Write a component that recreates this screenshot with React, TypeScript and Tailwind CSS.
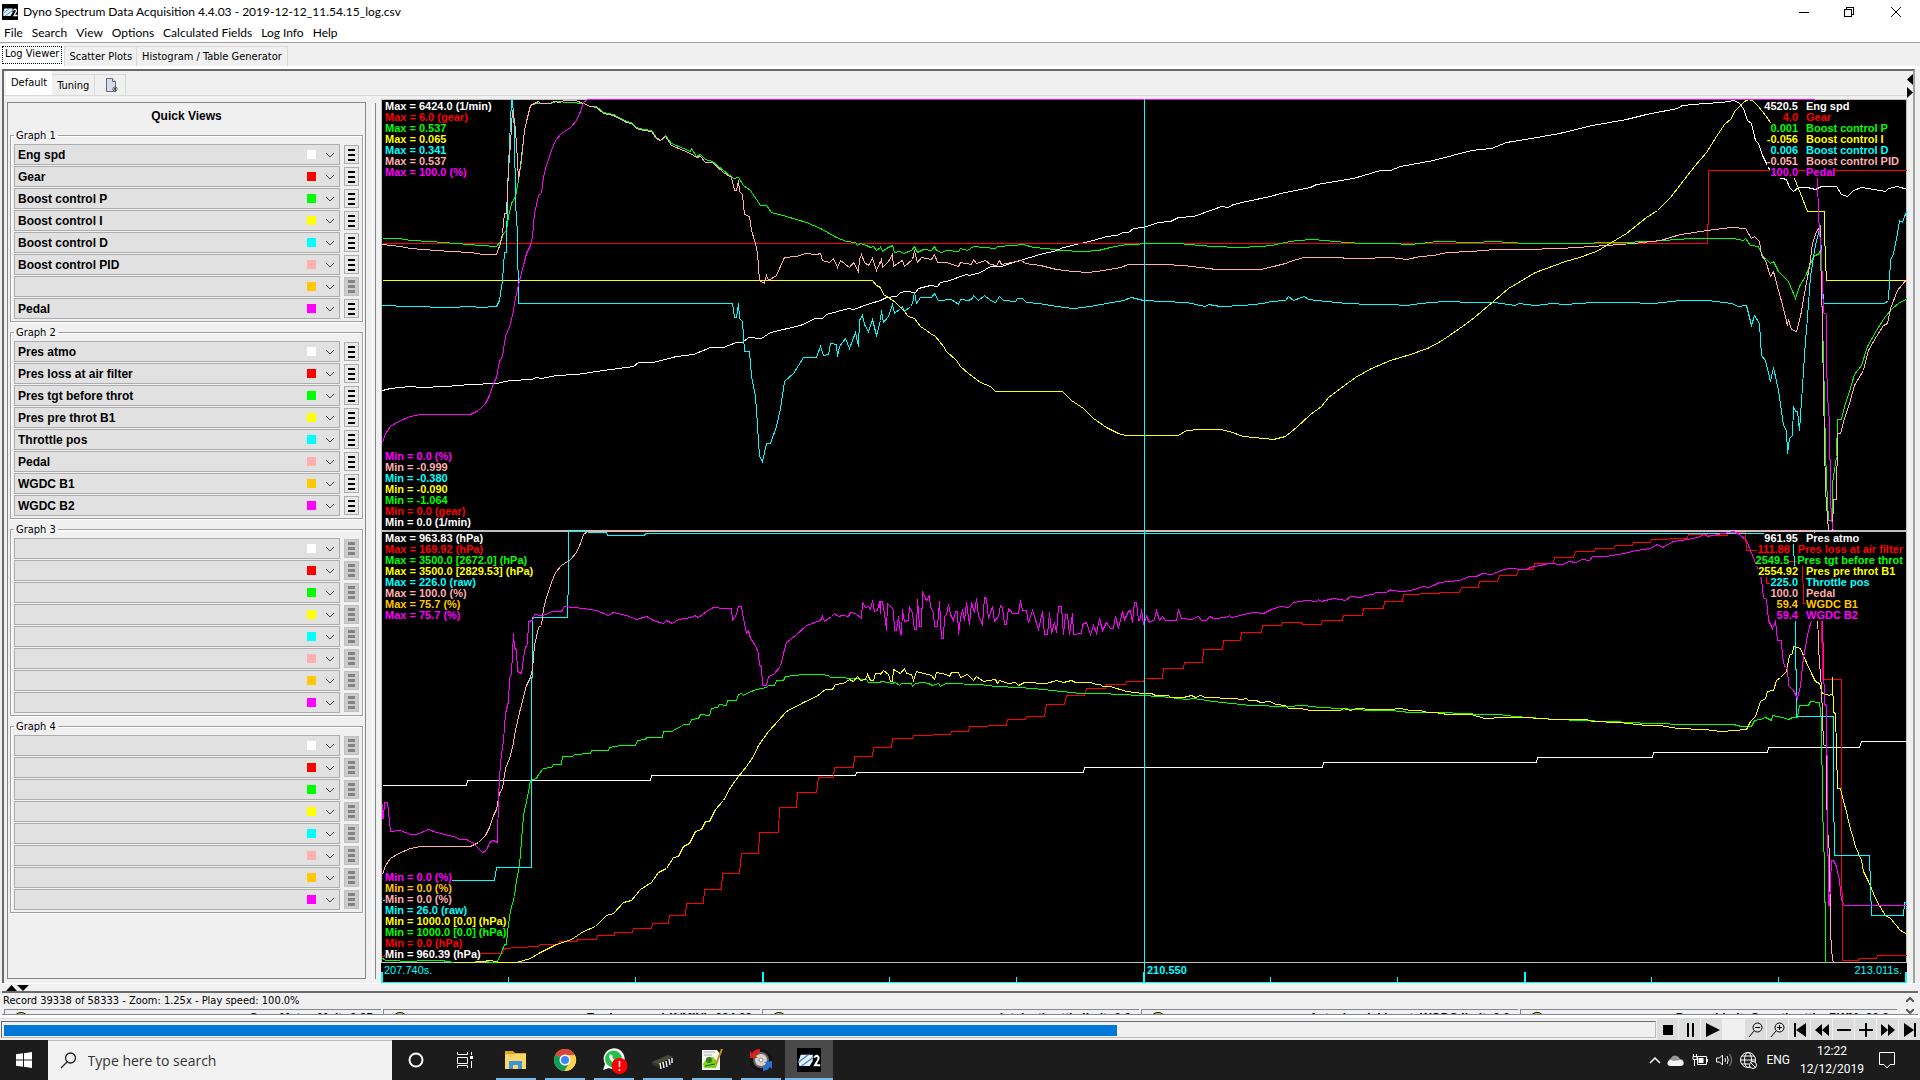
import React from 'react';

type Point = [number, number];

interface Trace {
  color: string;
  top: number;
  strips: string[];
}

const COLORS = ['#ffffff', '#ff0000', '#00ff00', '#ffff00', '#00ffff', '#ffafaf', '#ffc800', '#ff00ff'];

const GRAPHS = [
  { title: 'Graph 1', fields: ['Eng spd', 'Gear', 'Boost control P', 'Boost control I', 'Boost control D', 'Boost control PID', '', 'Pedal'] },
  { title: 'Graph 2', fields: ['Pres atmo', 'Pres loss at air filter', 'Pres tgt before throt', 'Pres pre throt B1', 'Throttle pos', 'Pedal', 'WGDC B1', 'WGDC B2'] },
  { title: 'Graph 3', fields: ['', '', '', '', '', '', '', ''] },
  { title: 'Graph 4', fields: ['', '', '', '', '', '', '', ''] },
];

// [color, max, min, current value, field name]
const READOUT_1 = [
  ['#ffffff', '6424.0 (1/min)', '0.0 (1/min)', '4520.5', 'Eng spd'],
  ['#ff0000', '6.0 (gear)', '0.0 (gear)', '4.0', 'Gear'],
  ['#00ff00', '0.537', '-1.064', '0.001', 'Boost control P'],
  ['#ffff00', '0.065', '-0.090', '-0.056', 'Boost control I'],
  ['#00ffff', '0.341', '-0.380', '0.006', 'Boost control D'],
  ['#ffafaf', '0.537', '-0.999', '-0.051', 'Boost control PID'],
  ['#ff00ff', '100.0 (%)', '0.0 (%)', '100.0', 'Pedal'],
];

const READOUT_2 = [
  ['#ffffff', '963.83 (hPa)', '960.39 (hPa)', '961.95', 'Pres atmo'],
  ['#ff0000', '169.92 (hPa)', '0.0 (hPa)', '111.88', 'Pres loss at air filter'],
  ['#00ff00', '3500.0 [2672.0] (hPa)', '1000.0 [0.0] (hPa)', '2549.5', 'Pres tgt before throt'],
  ['#ffff00', '3500.0 [2829.53] (hPa)', '1000.0 [0.0] (hPa)', '2554.92', 'Pres pre throt B1'],
  ['#00ffff', '226.0 (raw)', '26.0 (raw)', '225.0', 'Throttle pos'],
  ['#ffafaf', '100.0 (%)', '0.0 (%)', '100.0', 'Pedal'],
  ['#ffc800', '75.7 (%)', '0.0 (%)', '59.4', 'WGDC B1'],
  ['#ff00ff', '75.7 (%)', '0.0 (%)', '59.4', 'WGDC B2'],
];

// Samples are kept in three consecutive strips, each with its own origin and sample density
const STRIPS = [
  { left: 370, density: 3 },
  { left: 880, density: 3 },
  { left: 1390, density: 2.958 },
];

const PEDAL = [
  '36,1056 45,1030 60,1008 85,994 120,980 150,973 300,972 325,962 345,940 358,915 370,880 380,862 388,815 398,800 406,740 418,710 426,675 435,625 447,570 460,525 470,490 480,465 487,440 494,370 505,315 513,310 520,258 530,225 545,182 555,150 575,130 600,112 620,90 632,65 640,38 653,29 1530,29',
  '0,29 1530,29',
  '0,29 1257,29 1266,262 1268,380 1275,500 1281,668 1290,672 1292,825 1296,975 1300,980 1303,1230 1308,1315 1316,1322',
];

const TRACES: Trace[] = [
  {
    color: '#ffffff',
    top: 90,
    strips: [
      '36,900 60,896 120,890 150,892 230,888 300,884 380,879 420,870 485,867 500,862 515,864 560,856 620,853 700,840 790,828 805,818 850,817 920,800 970,793 1020,773 1060,772 1100,756 1118,758 1135,743 1175,745 1200,728 1290,706 1335,686 1358,686 1370,674 1435,656 1450,659 1500,640 1530,632',
      '0,632 20,623 50,618 60,608 80,604 105,608 115,594 150,586 172,588 180,578 200,575 260,552 268,556 300,548 330,530 365,530 400,516 440,505 490,490 520,483 550,473 600,460 640,450 680,438 710,437 730,428 745,426 760,415 790,412 835,398 870,395 895,383 940,378 1000,358 1025,350 1045,352 1060,343 1100,335 1170,320 1200,309 1290,293 1310,284 1420,265 1500,242 1530,240',
      '0,241 30,230 130,210 240,182 300,176 345,158 420,145 500,130 600,106 700,87 760,73 850,56 865,47 930,40 985,38 1000,34 1015,30 1030,36 1045,55 1058,90 1070,100 1082,150 1090,160 1102,195 1115,220 1125,245 1140,248 1150,262 1172,268 1182,293 1195,304 1208,292 1235,292 1260,298 1275,289 1322,289 1335,312 1352,320 1370,300 1395,292 1450,300 1465,304 1475,294 1500,290 1530,298',
    ],
  },
  {
    color: '#ff0000',
    top: 90,
    strips: ['36,461 1530,461', '0,461 1530,461', '0,461 940,461 941,350 943,241 1530,241'],
  },
  {
    color: '#00ff00',
    top: 90,
    strips: [
      '36,445 85,445 120,451 180,453 260,461 330,467 378,469 390,455 400,430 410,420 415,380 425,340 435,320 445,270 455,210 462,120 470,95 480,45 500,40 540,40 560,33 640,40 660,48 680,50 700,68 730,72 770,95 785,97 800,112 820,118 845,122 860,142 872,150 885,137 905,160 940,175 960,185 964,176 980,198 990,192 1005,208 1028,213 1060,240 1090,265 1105,262 1120,285 1140,300 1170,345 1190,345 1205,367 1250,380 1310,398 1350,415 1400,442 1430,455 1455,457 1462,466 1470,460 1490,466 1500,472 1510,468 1520,482 1530,472',
      '0,470 8,484 20,476 38,466 42,488 60,484 70,490 95,482 103,470 112,486 130,478 155,480 162,468 170,482 185,486 200,480 235,485 240,475 262,480 280,470 345,475 353,468 400,465 430,463 460,472 500,474 540,480 610,484 655,480 690,472 740,464 820,461 895,460 960,467 1000,470 1080,472 1140,468 1175,467 1215,457 1250,451 1300,448 1400,456 1450,459 1530,460',
      '0,460 60,462 90,460 140,455 250,456 310,453 400,459 530,461 680,458 770,454 890,445 1015,446 1045,452 1052,445 1065,466 1090,470 1102,495 1125,520 1133,514 1150,543 1178,575 1198,626 1210,590 1230,560 1245,520 1255,495 1268,492 1273,480 1276,600 1282,800 1287,1080 1291,1170 1297,1290 1308,1290 1310,1180 1320,1100 1323,988 1335,988 1345,950 1360,905 1375,852 1395,825 1412,770 1440,720 1465,678 1485,655 1505,640 1530,626',
    ],
  },
  {
    color: '#ffff00',
    top: 90,
    strips: [
      '36,572 1508,572 1520,585 1530,592',
      '0,592 10,612 25,622 45,636 70,660 85,678 103,684 120,710 140,720 150,730 165,738 190,770 200,785 230,812 240,830 265,850 300,877 330,890 346,904 548,904 575,930 610,956 640,985 680,1012 715,1030 735,1036 895,1036 920,1022 960,1018 1020,1018 1048,1024 1090,1038 1150,1045 1180,1048 1215,1038 1250,1012 1290,973 1325,948 1345,922 1380,896 1425,862 1475,835 1530,811',
      '0,811 60,793 110,775 150,755 175,735 215,710 250,683 310,630 350,594 430,546 520,515 560,502 610,485 640,466 700,430 760,382 790,360 830,322 860,282 900,228 935,188 965,138 990,104 1010,84 1020,64 1050,34 1060,29 1072,30 1090,48 1110,75 1130,105 1160,150 1196,265 1215,310 1235,364 1285,364 1286,420 1288,515 1291,572 1530,572',
    ],
  },
  {
    color: '#00ffff',
    top: 90,
    strips: [
      '36,647 115,650 240,652 300,650 330,652 378,649 388,630 396,570 402,487 410,487 413,300 418,160 424,30 428,30 432,120 437,340 441,430 445,640 1088,640 1092,682 1098,682 1104,640 1108,685 1116,695 1122,784 1138,784 1145,860 1155,920 1160,960 1168,1100 1178,1113 1190,1060 1200,1060 1220,1010 1230,955 1244,875 1270,850 1300,802 1340,802 1350,768 1360,795 1375,792 1380,760 1398,762 1402,800 1408,768 1425,745 1438,775 1455,728 1464,770 1467,690 1476,676 1484,702 1496,724 1508,688 1520,735 1530,690',
      '0,692 4,660 9,697 25,680 37,642 42,670 60,655 67,650 72,664 90,648 98,640 102,608 110,640 120,622 155,622 163,611 175,632 215,628 234,642 240,628 265,630 278,625 280,617 295,630 313,617 330,632 345,636 357,618 370,630 405,634 412,626 428,626 440,637 475,640 530,650 580,656 630,650 680,640 730,630 755,622 790,630 850,633 920,638 975,648 985,643 1020,648 1090,645 1150,640 1170,634 1215,630 1225,620 1240,630 1272,618 1285,628 1340,635 1400,640 1470,644 1530,642',
      '0,642 50,645 90,640 160,633 250,638 310,637 370,645 380,640 430,646 480,640 520,644 600,637 700,636 780,639 860,632 940,631 1010,640 1030,648 1055,646 1070,706 1077,675 1092,700 1100,795 1112,810 1125,875 1135,832 1150,900 1165,1005 1172,1020 1177,1090 1183,1045 1190,1035 1193,948 1198,965 1205,965 1210,1020 1220,890 1228,750 1233,720 1243,560 1255,480 1265,440 1273,405 1277,520 1282,640 1462,640 1475,630 1480,510 1490,490 1500,430 1508,392 1515,396 1530,355',
    ],
  },
  {
    color: '#ffafaf',
    top: 90,
    strips: [
      '36,464 90,468 120,474 200,480 240,485 300,488 340,493 378,493 390,460 398,430 402,370 410,370 414,240 420,160 426,62 432,90 438,160 446,268 452,225 462,120 470,95 480,45 500,38 505,33 512,40 540,40 550,33 570,38 580,31 615,32 640,40 660,50 680,52 700,70 730,75 770,98 785,100 800,115 820,121 845,125 860,145 872,152 885,140 905,165 940,180 960,190 980,202 990,198 1005,216 1028,218 1060,248 1085,262 1092,300 1100,300 1104,270 1108,305 1116,312 1124,373 1138,378 1145,420 1155,460 1162,490 1168,570 1182,580 1190,555 1196,572 1220,555 1230,530 1244,502 1280,500 1305,490 1340,494 1352,490 1358,512 1378,517 1390,505 1402,532 1412,512 1438,532 1450,516 1464,545 1467,508 1475,492 1482,516 1496,526 1508,505 1520,542 1530,515',
      '0,520 3,504 8,532 25,515 37,492 40,530 60,515 66,512 72,528 98,508 102,485 112,517 125,502 155,508 162,494 172,518 200,518 234,530 240,517 275,522 280,508 290,520 315,512 330,522 350,527 357,512 365,524 410,514 425,512 435,520 480,526 530,537 580,543 625,547 670,541 720,533 745,524 850,522 910,527 960,531 1010,537 1080,537 1140,538 1180,530 1215,520 1230,514 1270,503 1380,503 1400,505 1440,504 1530,503',
      '0,503 50,508 90,498 130,497 170,488 240,485 310,478 400,478 500,474 600,470 720,460 800,450 860,434 940,421 1010,412 1052,415 1070,445 1077,438 1092,455 1100,497 1112,512 1125,560 1135,545 1150,600 1165,655 1177,705 1180,688 1188,718 1203,724 1215,680 1225,610 1240,530 1250,460 1262,425 1273,408 1277,560 1283,905 1287,1200 1297,1320 1308,1320 1311,1228 1320,1228 1323,1030 1333,1030 1345,985 1360,940 1375,885 1400,840 1415,780 1440,740 1460,705 1473,700 1480,655 1500,600 1530,566',
    ],
  },
  { color: '#ff00ff', top: 90, strips: PEDAL },
  {
    color: '#ffffff',
    top: 520,
    strips: [
      '36,797 290,797 292,781 840,781 844,766 1456,766 1460,758 1530,758',
      '0,758 610,758 613,742 1327,742 1331,727 1530,727',
      '0,727 433,727 436,712 776,712 780,697 1116,697 1119,682 1389,682 1394,664 1530,664',
    ],
  },
  {
    color: '#ff0000',
    top: 520,
    strips: [
      '36,1309 48,1306 200,1303 333,1300 398,1300 402,1285 445,1282 505,1280 510,1273 565,1273 568,1264 620,1264 623,1258 680,1258 683,1246 732,1246 734,1237 786,1237 789,1225 845,1225 848,1210 895,1210 899,1186 945,1186 949,1151 1000,1151 1004,1108 1055,1108 1058,1060 1109,1060 1114,1000 1165,1000 1169,937 1225,937 1229,862 1279,862 1283,817 1340,817 1344,772 1390,772 1394,742 1450,742 1454,709 1508,709 1511,682 1530,682',
      '0,682 34,682 38,655 98,655 101,646 158,646 160,643 210,643 214,634 265,634 269,619 323,619 325,616 379,616 383,598 435,598 438,589 494,589 499,553 554,553 559,526 614,526 619,505 675,505 680,493 735,493 738,484 790,484 794,475 847,475 851,445 911,445 914,427 967,427 971,388 1027,388 1031,361 1080,361 1085,337 1144,337 1148,316 1205,316 1208,307 1265,307 1268,313 1325,313 1328,301 1387,301 1391,286 1447,286 1451,265 1510,265 1514,244 1530,244',
      '0,244 37,244 41,223 88,223 90,220 145,220 146,217 206,217 211,202 262,202 266,184 319,184 323,166 375,166 379,148 425,148 428,130 484,130 488,112 544,112 548,94 604,94 608,86 662,86 666,76 716,76 720,67 770,67 774,58 823,58 826,55 880,55 883,44 940,44 943,47 998,47 1001,37 1052,37 1055,90 1110,90 1113,190 1163,190 1165,125 1220,125 1223,250 1275,250 1279,478 1335,478 1337,900 1339,1321 1387,1321 1390,1315 1440,1315 1443,1306 1530,1306',
    ],
  },
  {
    color: '#00ff00',
    top: 520,
    strips: [
      '36,1315 50,1320 130,1323 150,1321 215,1321 250,1326 300,1326 330,1323 380,1326 392,1305 402,1272 409,1272 411,1235 422,1170 434,1130 440,1080 447,1035 455,960 461,885 470,845 476,815 482,780 498,775 504,762 520,745 545,742 550,733 573,733 578,710 608,710 612,703 660,700 664,691 714,691 718,682 750,677 796,677 802,660 825,658 830,653 877,651 881,635 907,635 912,628 935,620 940,613 958,613 963,598 985,596 990,584 1018,585 1024,565 1043,563 1048,554 1068,556 1073,540 1098,540 1105,522 1115,520 1120,527 1135,516 1160,507 1190,502 1195,497 1213,497 1218,482 1240,480 1245,470 1300,464 1350,463 1375,466 1382,471 1410,473 1440,476 1490,478 1495,487 1530,486',
      '0,484 25,486 35,490 45,486 58,496 65,490 95,490 98,498 105,490 130,487 145,489 158,495 175,490 182,498 195,491 300,493 345,500 420,501 490,508 600,519 660,521 780,525 840,528 895,534 920,538 940,536 1000,545 1110,556 1220,558 1270,556 1320,562 1380,565 1470,570 1530,571',
      '0,571 60,576 130,577 240,581 250,583 320,584 370,590 490,599 570,602 720,607 760,610 895,612 930,613 1015,614 1040,618 1070,619 1078,602 1095,598 1110,593 1127,602 1131,586 1160,592 1178,597 1190,592 1205,592 1210,556 1237,556 1245,543 1270,548 1277,600 1279,860 1284,1040 1287,1250 1289,1328',
    ],
  },
  {
    color: '#ffff00',
    top: 520,
    strips: [
      '250,1327 300,1327 365,1322 385,1326 440,1327 480,1315 510,1298 560,1272 605,1257 640,1233 675,1218 710,1186 730,1180 760,1146 785,1140 810,1107 845,1087 865,1057 890,1045 910,1012 925,1008 940,980 958,970 975,935 995,928 1005,905 1018,903 1035,868 1060,840 1080,803 1105,770 1130,740 1150,710 1165,675 1195,635 1225,600 1250,573 1300,548 1340,530 1365,509 1388,508 1395,493 1420,490 1438,478 1450,484 1462,468 1470,480 1485,478 1492,462 1500,482 1510,482 1515,460 1530,460',
      '0,463 10,452 25,462 30,484 37,484 41,448 60,460 72,446 80,460 95,462 100,480 110,455 155,466 162,478 170,458 200,462 208,470 213,458 235,458 240,472 262,464 280,480 290,470 310,485 345,478 353,490 357,481 385,490 405,486 415,497 432,488 500,490 530,482 550,487 575,482 585,487 630,487 650,492 660,492 668,500 690,498 740,515 790,521 815,520 825,526 865,526 870,531 910,532 935,527 945,531 962,527 975,531 1060,535 1085,538 1100,536 1105,542 1130,540 1142,547 1170,545 1185,554 1215,556 1225,565 1260,566 1290,571 1380,570 1390,566 1410,570 1430,565 1480,569 1530,569',
      '0,567 30,566 60,572 90,571 110,577 135,576 170,584 240,584 280,594 340,592 400,592 490,598 580,598 600,604 680,608 760,615 800,615 850,624 930,629 980,633 1055,627 1065,605 1080,590 1097,545 1112,535 1118,515 1135,510 1143,480 1155,473 1172,453 1182,405 1190,400 1195,380 1215,385 1230,420 1250,465 1258,485 1270,490 1280,520 1300,525 1308,520 1310,472 1312,578 1318,580 1322,690 1325,805 1334,805 1340,845 1350,875 1360,915 1367,945 1377,978 1395,1020 1400,1055 1415,1085 1430,1120 1440,1140 1465,1185 1480,1195 1510,1230 1530,1242',
    ],
  },
  {
    color: '#00ffff',
    top: 520,
    strips: [
      '36,1141 60,1141 62,1081 374,1081 378,1042 484,1042 485,660 488,293 593,293 594,160 596,35 710,36 713,46 822,46 825,41 1530,41',
      '0,41 1530,41',
      '0,41 1195,41 1199,300 1203,589 1311,589 1313,800 1315,1006 1418,1006 1421,1100 1424,1187 1519,1187 1522,1148 1530,1148',
    ],
  },
  { color: '#ffafaf', top: 522, strips: PEDAL },
  {
    color: '#ff00ff',
    top: 520,
    strips: [
      '36,850 36,895 40,895 42,848 52,848 60,935 90,930 120,942 140,942 175,929 200,938 250,950 270,958 290,958 310,970 320,978 338,997 350,992 358,968 370,962 382,966 386,830 390,728 400,660 405,580 415,545 418,475 424,460 429,340 433,385 438,388 442,455 455,460 460,415 466,380 472,375 476,305 488,300 493,282 515,285 530,282 545,275 575,274 583,260 640,265 680,270 715,285 730,278 770,285 800,298 830,290 850,300 880,310 890,302 908,310 925,298 965,292 972,285 985,292 1010,275 1030,262 1060,265 1085,265 1088,300 1098,282 1106,260 1114,260 1120,295 1130,340 1136,330 1140,355 1155,375 1165,400 1168,435 1175,438 1178,495 1190,495 1195,470 1210,462 1230,438 1240,400 1250,366 1275,345 1310,315 1350,300 1358,290 1362,305 1385,290 1393,280 1405,290 1418,286 1435,290 1440,278 1455,280 1473,295 1478,248 1485,262 1495,258 1500,268 1508,242 1514,275 1522,270 1528,245 1530,280',
      '0,244 8,244 12,280 18,330 22,250 35,262 40,270 44,330 50,330 54,290 60,343 64,343 68,268 74,305 84,300 89,258 98,280 104,328 108,328 112,238 118,320 124,320 128,214 140,240 148,225 152,262 160,278 164,320 172,318 177,244 184,355 190,355 194,288 200,283 204,252 210,284 220,300 226,274 232,275 236,343 242,295 246,268 252,302 260,248 267,313 274,248 282,278 290,235 294,290 302,298 308,316 314,232 320,234 324,296 336,260 342,303 356,290 360,256 366,262 372,312 380,312 386,265 396,280 415,280 420,242 428,270 440,272 446,307 456,270 464,288 474,328 486,274 494,343 502,343 507,278 515,340 522,308 530,337 536,260 544,260 549,343 556,284 562,284 567,343 576,280 581,343 604,340 608,314 618,308 630,343 640,316 650,340 658,295 668,330 678,308 690,326 700,326 706,290 716,325 726,275 734,298 744,275 752,270 757,306 762,247 770,247 774,300 780,298 785,268 790,312 798,290 808,307 822,298 830,270 838,300 848,290 856,301 888,301 895,268 905,294 935,298 955,290 965,301 980,300 988,288 1000,294 1040,292 1048,285 1055,292 1070,288 1090,282 1120,278 1150,280 1175,268 1200,258 1225,262 1240,248 1280,242 1310,243 1315,237 1325,243 1360,235 1395,240 1410,230 1440,231 1455,225 1480,224 1485,218 1520,216 1530,208',
      '0,210 40,214 60,210 80,205 100,200 115,203 130,197 145,188 175,184 205,182 235,170 255,168 275,160 300,163 330,150 350,145 400,147 425,140 445,135 470,130 510,134 530,125 550,127 570,118 590,122 600,110 640,108 690,100 730,92 770,85 790,73 805,82 840,65 880,58 910,53 930,44 940,50 970,42 1000,38 1015,34 1035,44 1055,60 1065,90 1090,150 1100,178 1105,232 1115,238 1120,300 1130,325 1140,305 1147,360 1157,362 1162,410 1168,440 1175,443 1180,495 1195,512 1205,535 1215,495 1222,412 1230,378 1238,330 1246,300 1250,180 1275,160 1280,300 1284,552 1291,555 1293,850 1296,1157 1301,1157 1305,1020 1312,1020 1322,1038 1330,1080 1336,1140 1345,1157 1530,1157',
    ],
  },
];

const toPoints = ({ top, strips }: Trace) =>
  strips
    .flatMap((strip, i) =>
      strip.split(' ').map((pair): Point => {
        const [x, y] = pair.split(',').map(Number);
        return [STRIPS[i].left + x / STRIPS[i].density, top + y / 3];
      }),
    )
    .map(([x, y]) => `${Math.floor(x) + 0.5},${Math.floor(y) + 0.5}`)
    .join(' ');

const AppLogo = ({ className }: { className: string }) => (
  <svg viewBox="0 0 16 16" className={className} aria-hidden="true">
    <rect width="16" height="16" fill="#000" />
    <path d="M2.500 4.500h8v4l-2 3.500h-7l-.5-3z" fill="#e6f1ff" />
    <path d="M1 9.500L7.500 4.500M3 12L10.500 6.500" stroke="#3f86cf" />
    <path d="M11.500 6.500Q12 5 13.500 5.200 15 6 14 8L12 11.500H15.500" stroke="#fff" strokeWidth="1.300" fill="none" />
  </svg>
);

const TitleBar = () => (
  <header className="flex h-6 shrink-0 items-center bg-white pl-[2px] font-['Lato',sans-serif] text-xs text-black">
    <AppLogo className="size-4" />
    <h1 className="ml-[5px] flex-1 whitespace-nowrap">Dyno Spectrum Data Acquisition 4.4.03 - 2019-12-12_11.54.15_log.csv</h1>
    <div className="flex h-5">
      <button aria-label="Minimize" className="flex w-[45px] items-center justify-center">
        <svg width="10" height="10" stroke="#000" fill="none" shapeRendering="crispEdges"><path d="M0 5.500h10" /></svg>
      </button>
      <button aria-label="Restore" className="flex w-[45px] items-center justify-center">
        <svg width="10" height="10" stroke="#000" fill="none" shapeRendering="crispEdges"><path d="M.5 2.500h7v7h-7zM2.500 2V.5h7v7H8" /></svg>
      </button>
      <button aria-label="Close" className="flex w-[49px] items-center justify-center">
        <svg width="10" height="10" stroke="#000" fill="none"><path d="M0 0l10 10M10 0L0 10" /></svg>
      </button>
    </div>
  </header>
);

const MenuBar = () => (
  <nav className="flex h-[18px] shrink-0 items-center gap-[9px] bg-white pl-1 font-['Lato',sans-serif] text-xs text-black">
    {['File', 'Search', 'View', 'Options', 'Calculated Fields', 'Log Info', 'Help'].map((item) => (
      <button key={item} className="whitespace-nowrap">{item}</button>
    ))}
  </nav>
);

const MainTabs = () => (
  <div role="tablist" className="flex h-6 shrink-0 items-end border-t border-[#a0a0a0]">
    <button role="tab" aria-selected="true" className="h-[22px] bg-white px-[2px] pb-px">
      <span className="flex h-[18px] items-center border border-dotted border-black px-[2px]">Log Viewer</span>
    </button>
    <button role="tab" aria-selected="false" className="h-5 border-x border-t border-[#d9d9d9] px-1 pt-px">Scatter Plots</button>
    <button role="tab" aria-selected="false" className="h-5 border-r border-t border-[#d9d9d9] px-[5px] pt-px">Histogram / Table Generator</button>
  </div>
);

const ViewTabs = () => (
  <div role="tablist" className="flex h-6 shrink-0 items-end pl-[2px]">
    <button role="tab" aria-selected="true" className="h-6 bg-white px-[5px] pt-px">Default</button>
    <button role="tab" aria-selected="false" className="h-[21px] border-r border-t border-[#d9d9d9] px-[5px] pt-[2px]">Tuning</button>
    <button aria-label="New view" className="flex h-[21px] w-[31px] items-center justify-center border-r border-t border-[#d9d9d9] pl-1 pt-px">
      <svg width="14" height="15" viewBox="0 0 14 15">
        <path d="M1.500.5h6l3 3v10h-9z" fill="#d5dcf0" stroke="#667" />
        <path d="M7.500.5v3h3" fill="#fff" stroke="#667" />
        <path d="M10 8v6M7 11h6M8 9l4 4M12 9l-4 4" stroke="#444" strokeWidth="0.700" />
      </svg>
    </button>
  </div>
);

interface FieldRowProps {
  label: string;
  field: string;
  color: string;
}

const FieldRow = ({ label, field, color }: FieldRowProps) => (
  <div className="flex items-center gap-1">
    <div className="relative flex-1">
      <select
        aria-label={label}
        defaultValue={field}
        className="block h-[21px] w-full appearance-none border border-[#adadad] bg-[#e1e1e1] pl-[3px] font-['Liberation_Sans',Arial,sans-serif] text-xs font-bold text-black"
      >
        <option value={field}>{field}</option>
      </select>
      <span className="pointer-events-none absolute inset-y-0 right-[5px] flex items-center gap-[9px]">
        <span className="size-[9px]" style={{ backgroundColor: color }} />
        <svg width="10" height="6" fill="none" stroke="#444"><path d="M1 1l4 4 4-4" /></svg>
      </span>
    </div>
    <button
      aria-label={`${label} options`}
      disabled={!field}
      className="group flex h-[19px] w-[15px] flex-col items-center justify-center gap-[3px] border border-[#adadad] bg-[#e8e8e8] disabled:gap-[2px] disabled:border-[#bfbfbf] disabled:bg-[#cccccc]"
    >
      {[0, 1, 2].map((i) => (
        <span key={i} className="h-[2px] w-[7px] bg-black group-disabled:h-[3px] group-disabled:bg-[#838383]" />
      ))}
    </button>
  </div>
);

const QuickViews = () => (
  <aside className="mb-1 flex w-[359px] shrink-0 flex-col border border-[#828790] px-[2px]">
    <h2 className="h-6 pt-[5px] text-center font-['Liberation_Sans',Arial,sans-serif] text-xs font-bold">Quick Views</h2>
    {GRAPHS.map((graph) => (
      <fieldset key={graph.title} className="mb-[2px] h-[195px] min-w-0 border border-[#a0a0a0] px-[3px] shadow-[inset_1px_1px_0_#fff,1px_1px_0_#fff]">
        <legend className="h-[17px] px-[2px] leading-[17px]">{graph.title}</legend>
        <div className="flex flex-col gap-px">
          {graph.fields.map((field, i) => (
            <FieldRow key={i} label={`${graph.title} field ${i + 1}`} field={field} color={COLORS[i]} />
          ))}
        </div>
      </fieldset>
    ))}
  </aside>
);

interface ReadoutProps {
  rows: string[][];
}

const Readout = ({ rows }: ReadoutProps) => (
  <div className="pointer-events-none absolute inset-0 flex justify-between px-1 pb-[3px] pt-[2px]">
    <div className="flex flex-col justify-between">
      <div className="flex flex-col items-start">
        {rows.map(([color, max], i) => (
          <span key={i} className="bg-black" style={{ color }}>Max = {max}</span>
        ))}
      </div>
      <div className="flex flex-col-reverse items-start">
        {rows.map(([color, , min], i) => (
          <span key={i} className="bg-black" style={{ color }}>Min = {min}</span>
        ))}
      </div>
    </div>
    <div className="flex flex-col">
      {rows.map(([color, , , value, name], i) => (
        <div key={i} className="flex justify-end gap-2" style={{ color }}>
          <span className="bg-black">{value}</span>
          <div className="flex min-w-[97px]"><span className="bg-black">{name}</span></div>
        </div>
      ))}
    </div>
  </div>
);

const TICKS = [381, 508, 635, 762, 889, 1016, 1143, 1270, 1397, 1524, 1651, 1778, 1905];

const Graphs = () => (
  <section aria-label="Graphs" className="relative flex min-w-0 flex-1 flex-col bg-black font-['Liberation_Sans',Arial,sans-serif] text-[11px] font-bold leading-[11px]">
    <svg viewBox="381 99 1526 884" preserveAspectRatio="none" className="absolute inset-0 size-full" fill="none" shapeRendering="crispEdges">
      <path d="M381 99.500h1526M381.500 99v864M381 962.500h1526M1906.500 99v864" stroke="#c0c0c0" />
      <path d="M381 531h1526" stroke="#c0c0c0" strokeWidth="2" />
      {TRACES.map((trace, i) => (
        <polyline key={i} points={toPoints(trace)} stroke={trace.color} />
      ))}
      <path d="M1144.500 99v884M381 982.500h1526" stroke="#00ffff" />
      {TICKS.map((x, i) => (
        <rect key={x} x={x} y={i % 3 ? 977 : 972} width={i % 3 ? 1 : 2} height={i % 3 ? 5 : 10} fill="#00ffff" />
      ))}
    </svg>
    <div className="relative flex-1"><Readout rows={READOUT_1} /></div>
    <div className="relative flex-1"><Readout rows={READOUT_2} /></div>
    <div className="relative flex h-5 shrink-0 justify-between px-[3px] pt-[2px] font-normal text-[#00ffff]">
      <span>207.740s.</span>
      <span className="absolute left-1/2 ml-[3px] font-bold">210.550</span>
      <span className="pr-[2px]">213.011s.</span>
    </div>
  </section>
);

const GAUGES = ['Gear Meter, Mult: 0.95', 'Engine speed (1/MIN): 694.68', 'Intake throttle limit: 0.0', 'Actual pedal input, WGDC limit: 0.0', 'Power Limit, Gear throttle, PWM: 30.2'];

const StatusPanel = () => (
  <section className="mx-[2px] flex h-[24px] shrink-0 border-t-2 border-b border-t-[#696969] border-b-[#828790]">
    <div className="flex min-w-0 flex-1 flex-col overflow-hidden">
      <p className="h-4 shrink-0 pl-px leading-4">Record 39338 of 58333 - Zoom: 1.25x - Play speed: 100.0%</p>
      <div className="flex h-[5px] gap-[2px] overflow-hidden pl-[2px]">
        {GAUGES.map((gauge) => (
          <div key={gauge} className="flex h-6 flex-1 justify-between border-l border-t border-[#828790] px-2 pt-[2px] font-['Liberation_Sans',Arial,sans-serif] text-xs font-bold leading-3">
            <span className="h-4 w-4 shrink-0 rounded-full border border-black bg-[#e6e03c]" />
            <span className="whitespace-nowrap">{gauge}</span>
          </div>
        ))}
      </div>
    </div>
    <div className="flex w-[21px] flex-col items-center justify-between pl-1 pt-1">
      <button aria-label="Scroll up"><svg width="8" height="5" fill="none" stroke="#555" strokeWidth="2" className="block"><path d="M0 5l4-4 4 4" /></svg></button>
      <button aria-label="Scroll down"><svg width="8" height="5" fill="none" stroke="#555" strokeWidth="2" className="block"><path d="M0 0l4 4 4-4" /></svg></button>
    </div>
  </section>
);

const PLAYER_BUTTONS: [string, React.ReactNode][] = [
  ['Stop', <path d="M6 6h10v10H6z" />],
  ['Pause', <path d="M8 4h2v14H8zM13 4h2v14h-2z" />],
  ['Play', <path d="M5 4l14 7-14 7z" />],
  ['', null],
  ['Zoom out', <g fill="none" stroke="#000"><circle cx="12.500" cy="8.500" r="4.500" /><path d="M10 8.500h5M9 12l-5 6" /></g>],
  ['Zoom in', <g fill="none" stroke="#000"><circle cx="12.500" cy="8.500" r="4.500" /><path d="M10 8.500h5M12.500 6v5M9 12l-5 6" /></g>],
  ['First', <path d="M5 4h2v14H5zM17 4v14l-10-7z" />],
  ['Rewind', <path d="M11 5v12l-7-6zM18 5v12l-7-6z" />],
  ['Slower', <path d="M4 10h14v2H4z" />],
  ['Faster', <path d="M4 10h14v2H4zM10 4h2v14h-2z" />],
  ['Fast forward', <path d="M4 5v12l7-6zM11 5v12l7-6z" />],
  ['Last', <path d="M5 4v14l10-7zM15 4h2v14h-2z" />],
];

const PlayerBar = () => (
  <div className="flex h-[21px] shrink-0">
    <div className="mx-px my-[2px] flex-1 border border-[#bcbcbc] border-l-[#696969] border-t-[#696969] px-[2px] pb-[2px] pt-[3px]">
      <div role="progressbar" aria-label="Playback position" aria-valuenow={67} className="h-[11px] bg-[#0078d7]" style={{ width: `${(1113 / 1649) * 100}%` }} />
    </div>
    <div className="flex gap-px">
      {PLAYER_BUTTONS.map(([label, icon]) =>
        label ? (
          <button key={label} aria-label={label} className="w-[21px] overflow-hidden bg-[#dddddd]">
            <svg width="22" height="21" viewBox="0 0 22 21" className="block">{icon}</svg>
          </button>
        ) : (
          <span key="gap" className="w-[21px]" />
        ),
      )}
    </div>
  </div>
);

const TASKS: [string, React.ReactNode][] = [
  ['File Explorer', (
    <>
      <path d="M1 3h8l2 2h11v16H1z" fill="#e8a317" />
      <path d="M1 6h21v15H1z" fill="#fcd667" />
      <path d="M5 21v-8h13v8h-4v-4H9v4z" fill="#3a96dd" />
    </>
  )],
  ['Chrome', (
    <>
      <circle cx="12" cy="12" r="11" fill="#fbc02d" />
      <path d="M12 12L2.500 6.500A11 11 0 0 1 21.500 6.500z" fill="#db4437" />
      <path d="M12 12L2.500 6.500A11 11 0 0 0 11 23l4-6z" fill="#0f9d58" />
      <path d="M12 7h10a11 11 0 0 1-10 16l5-9z" fill="#fdd04d" />
      <circle cx="12" cy="12" r="5.500" fill="#fff" />
      <circle cx="12" cy="12" r="4" fill="#4285f4" />
    </>
  )],
  ['WhatsApp', (
    <>
      <path d="M1 22l2-6a10.500 10.500 0 1 1 4 4z" fill="#fff" />
      <circle cx="11.500" cy="11" r="8.500" fill="#25c04c" />
      <path d="M8 6c-3 4 3 11 8 9l-1-3-2 1-3-4 1-1z" fill="#fff" />
      <circle cx="17.500" cy="18" r="8" fill="#f00" />
      <path d="M17.500 13v6M17.500 21v2" stroke="#fff" strokeWidth="1.500" />
    </>
  )],
  ['Chip tool', (
    <>
      <path d="M1 14L17 7l5 2-14 8z" fill="#4a4a38" />
      <path d="M1 14v3l7 3v-3z" fill="#33332a" />
      <path d="M8 17l14-8v4L9 19z" fill="#111" />
      <path d="M9 15l1 6M12 14l1 6M15 13l1 6M18 11l1 6M21 10v5" stroke="#eee" strokeWidth="1.500" />
    </>
  )],
  ['Notepad++', (
    <>
      <path d="M2 2h15l3 4v16H2z" fill="#f3f6ee" />
      <path d="M4 4h11M4 7h8" stroke="#aaa" />
      <path d="M3 16l4-6 6-1 5 5-2 6H4z" fill="#7ed321" />
      <circle cx="9" cy="12" r="3" fill="#3c7a1c" />
      <path d="M5 18l10-2" stroke="#225511" />
      <path d="M22 1l-6 15" stroke="#d68a1c" strokeWidth="2" />
    </>
  )],
  ['Sync disc', (
    <>
      <circle cx="12" cy="12" r="9.500" fill="#666" stroke="#111" strokeWidth="3" />
      <circle cx="12" cy="12" r="6" fill="#d8d4cc" />
      <circle cx="12" cy="12" r="2" fill="#fff" stroke="#888" />
      <path d="M1 10V3l2 2q3-4 8-4v4q-3 0-5 3l3 2z" fill="#d81e1e" />
      <path d="M23 13v8l-2-2q-3 4-7 4v-4q3-1 4-3l-3-2z" fill="#2a6fd6" />
    </>
  )],
];

const Taskbar = () => (
  <footer className="flex h-10 shrink-0 items-stretch bg-[#1c1c1c] font-['Roboto',sans-serif] text-white">
    <button aria-label="Start" className="flex w-12 items-center justify-center">
      <svg width="16" height="16" fill="#fff"><path d="M0 2.300L7 1.300v6.200H0zM8 1.200L16 0v7.500H8zM0 8.500h7v6.200l-7-1zM8 8.500h8V16l-8-1.200z" /></svg>
    </button>
    <label className="flex w-[344px] items-center gap-3 border-t border-[#bdbdbd] bg-[#f2f2f2] pl-3">
      <svg width="17" height="17" fill="none" stroke="#222" strokeWidth="1.300"><circle cx="10.500" cy="6" r="5" /><path d="M7 10L1 16" /></svg>
      <input type="text" aria-label="Search" placeholder="Type here to search" className="w-full bg-transparent font-['Open_Sans',sans-serif] text-[14px] text-[#333] outline-none placeholder:text-[#333]" />
    </label>
    <button aria-label="Cortana" className="flex w-12 items-center justify-center">
      <svg width="16" height="16" fill="none" stroke="#fff" strokeWidth="2"><circle cx="8" cy="8" r="6.500" /></svg>
    </button>
    <button aria-label="Task view" className="mr-[3px] flex w-12 items-center justify-center">
      <svg width="17" height="16" fill="none" stroke="#fff"><path d="M1.500 0v2.500h10V0M1.500 5.500h10v6h-10zM1.500 16v-2.500h10V16M15.500 0v3M15.500 9v7" /><path d="M14 4h3v3h-3z" fill="#fff" stroke="none" /></svg>
    </button>
    {TASKS.map(([name, icon]) => (
      <button key={name} aria-label={name} className="flex w-[49px] flex-col items-center justify-between pt-2">
        <svg width="24" height="24" viewBox="0 0 24 24" className="overflow-visible">{icon}</svg>
        <span className="h-[2px] w-10 bg-[#76b9ed]" />
      </button>
    ))}
    <button aria-label="Dyno Spectrum" className="flex w-12 flex-col items-center justify-between bg-[#4a4a4a] pt-2">
      <AppLogo className="size-6" />
      <span className="h-[2px] w-full bg-[#76b9ed]" />
    </button>
    <div className="ml-auto flex items-center">
      <button aria-label="Hidden icons" className="mr-[6px]"><svg width="12" height="8" fill="none" stroke="#fff" strokeWidth="1.500"><path d="M1 7l5-5 5 5" /></svg></button>
      <svg width="17" height="12" className="mr-2"><path d="M4 11a4 4 0 0 1 0-7 5 5 0 0 1 9 1 3 3 0 0 1 1 6z" fill="#999" /><path d="M3 12a3 3 0 0 1 1-6l3 1 6-1a3 3 0 0 1 1 6z" fill="#f5f5f5" /></svg>
      <svg width="17" height="14" fill="none" stroke="#fff" className="mr-[7px]"><path d="M5.500 3.500h9v8h-9zM15.500 6v3M2.500 6v7M1 3.500h4v3H1zM1.500 1v2M4.500 1v2" /><path d="M6.500 5h5v5h-5z" fill="#fff" stroke="none" /></svg>
      <svg width="17" height="14" fill="none" stroke="#fff" className="mr-[7px]"><path d="M.5 5h3l3-3v10l-3-3h-3zM9 5q1 2 0 4M11 3q2.500 4 0 8" /><path d="M13.500 1q4 6 0 12" stroke="#888" /></svg>
      <svg width="17" height="17" fill="none" stroke="#fff" className="mr-[9px]"><circle cx="8" cy="8" r="7.500" /><ellipse cx="8" cy="8" rx="3.500" ry="7.500" /><path d="M.5 8h15M2 4h12M2 12h7" /><circle cx="13" cy="13" r="3.500" fill="#1c1c1c" /><path d="M10.500 10.500l5 5" /></svg>
      <span className="mr-3 text-xs">ENG</span>
      <div className="flex w-[60px] flex-col items-center whitespace-nowrap text-xs leading-[18px]">
        <time>12:22</time>
        <time>12/12/2019</time>
      </div>
      <button aria-label="Notifications" className="ml-[17px] mr-6"><svg width="17" height="17" fill="none" stroke="#fff"><path d="M.5.5h15v12H11L8 16l-3-3.500H.5z" /></svg></button>
    </div>
  </footer>
);

const App: React.FC = () => (
  <div className="flex h-screen flex-col overflow-hidden bg-[#f0f0f0] font-['DejaVu_Sans_Condensed','DejaVu_Sans',sans-serif] text-[11px] text-black">
    <TitleBar />
    <MenuBar />
    <MainTabs />
    <div className="h-[3px] shrink-0 bg-white" />
    <div className="mr-[5px] ml-[2px] flex min-h-0 flex-1 border-x-2 border-t-2 border-[#696969] border-r-[#a0a0a0]">
      <main className="flex min-w-0 flex-1 flex-col">
        <ViewTabs />
        <div className="mb-[3px] h-px shrink-0 bg-[#d9d9d9]" />
        <div className="flex min-h-0 flex-1 pl-[3px]">
          <div className="flex pt-[3px]"><QuickViews /></div>
          <div className="my-1 ml-[6px] mr-[5px] w-[4px] shrink-0 border-l border-r border-l-white border-r-[#828790]" />
          <Graphs />
        </div>
      </main>
      <div className="flex w-[6px] flex-col items-center gap-[2px] pt-[3px]">
        <button aria-label="Collapse right"><svg width="6" height="11" className="block"><path d="M6 0v11L0 5.500z" /></svg></button>
        <button aria-label="Expand right"><svg width="6" height="11" className="block"><path d="M0 0v11l6-5.500z" /></svg></button>
      </div>
    </div>
    <div className="flex h-2 shrink-0 items-end border-t border-white pl-[6px]">
      <button aria-label="Collapse down"><svg width="11" height="6" className="block"><path d="M0 6h11L5.500 0z" /></svg></button>
      <button aria-label="Expand down"><svg width="12" height="6" className="block"><path d="M0 0h12L6 6z" /></svg></button>
    </div>
    <StatusPanel />
    <div className="h-1 shrink-0 border-b border-[#d9d9d9] bg-white" />
    <PlayerBar />
    <Taskbar />
  </div>
);

export default App;
